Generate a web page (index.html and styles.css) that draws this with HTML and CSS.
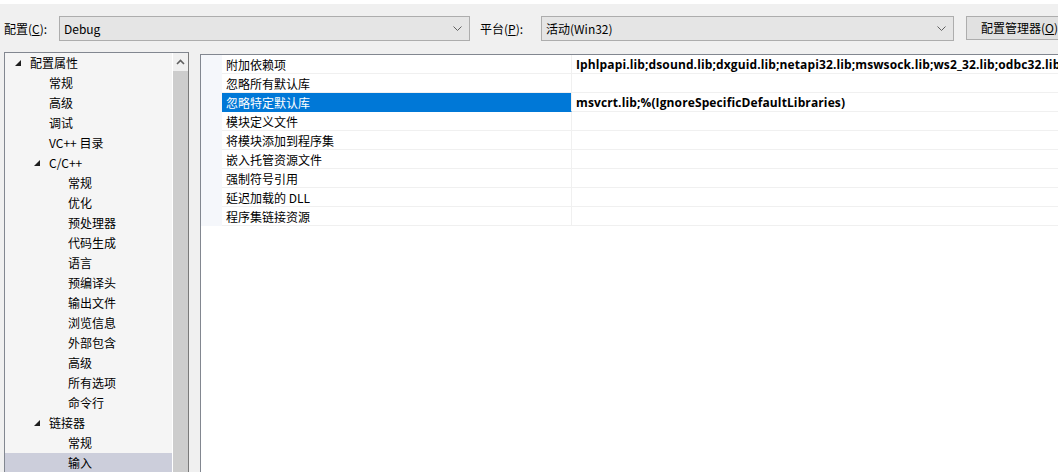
FILE: index.html
```html
<!DOCTYPE html>
<html lang="zh-CN">
<head>
    <meta charset="UTF-8" />
    <title>属性页</title>
    <link rel="stylesheet" href="styles.css">
</head>
<body>
    <div class="topstrip"></div>

    <div class="toolbar">
        <label class="tb-label cfg-label">配置(<u>C</u>):</label>
        <div class="combo cfg-combo">
            <span class="combo-text">Debug</span>
            <svg class="combo-arrow" width="9" height="6" viewBox="0 0 9 6"><path d="M0.5 0.5 L4.5 4.5 L8.5 0.5" fill="none" stroke="#606060" stroke-width="1"/></svg>
        </div>
        <label class="tb-label plat-label">平台(<u>P</u>):</label>
        <div class="combo plat-combo">
            <span class="combo-text">活动(Win32)</span>
            <svg class="combo-arrow" width="9" height="6" viewBox="0 0 9 6"><path d="M0.5 0.5 L4.5 4.5 L8.5 0.5" fill="none" stroke="#606060" stroke-width="1"/></svg>
        </div>
        <div class="button">配置管理器(<u>O</u>)</div>
    </div>

    <div class="main">
        <div class="tree-panel">
            <ul class="tree">
                <li class="node lvl0"><span class="twisty"></span>配置属性</li>
                <li class="node lvl1">常规</li>
                <li class="node lvl1">高级</li>
                <li class="node lvl1">调试</li>
                <li class="node lvl1">VC++ 目录</li>
                <li class="node lvl1"><span class="twisty"></span>C/C++</li>
                <li class="node lvl2">常规</li>
                <li class="node lvl2">优化</li>
                <li class="node lvl2">预处理器</li>
                <li class="node lvl2">代码生成</li>
                <li class="node lvl2">语言</li>
                <li class="node lvl2">预编译头</li>
                <li class="node lvl2">输出文件</li>
                <li class="node lvl2">浏览信息</li>
                <li class="node lvl2">外部包含</li>
                <li class="node lvl2">高级</li>
                <li class="node lvl2">所有选项</li>
                <li class="node lvl2">命令行</li>
                <li class="node lvl1"><span class="twisty"></span>链接器</li>
                <li class="node lvl2">常规</li>
                <li class="node lvl2 selected">输入</li>
            </ul>
            <div class="scrollbar">
                <div class="scroll-up">
                    <svg width="9" height="6" viewBox="0 0 9 6"><path d="M1 5 L4.5 1.5 L8 5" fill="none" stroke="#606060" stroke-width="1.6"/></svg>
                </div>
                <div class="scroll-thumb"></div>
            </div>
        </div>

        <div class="grid-panel">
            <div class="grid">
                <div class="row"><div class="gutter"></div><div class="name">附加依赖项</div><div class="value">Iphlpapi.lib;dsound.lib;dxguid.lib;netapi32.lib;mswsock.lib;ws2_32.lib;odbc32.lib</div></div>
                <div class="row"><div class="gutter"></div><div class="name">忽略所有默认库</div><div class="value"></div></div>
                <div class="row"><div class="gutter"></div><div class="name active">忽略特定默认库</div><div class="value">msvcrt.lib;%(IgnoreSpecificDefaultLibraries)</div></div>
                <div class="row"><div class="gutter"></div><div class="name">模块定义文件</div><div class="value"></div></div>
                <div class="row"><div class="gutter"></div><div class="name">将模块添加到程序集</div><div class="value"></div></div>
                <div class="row"><div class="gutter"></div><div class="name">嵌入托管资源文件</div><div class="value"></div></div>
                <div class="row"><div class="gutter"></div><div class="name">强制符号引用</div><div class="value"></div></div>
                <div class="row"><div class="gutter"></div><div class="name">延迟加载的 DLL</div><div class="value"></div></div>
                <div class="row"><div class="gutter"></div><div class="name">程序集链接资源</div><div class="value"></div></div>
            </div>
        </div>
    </div>
</body>
</html>
```

FILE: styles.css
```css
body {
    margin: 0;
    background-color: #f0f0f0;
    font-family: "Noto Sans CJK SC", "Noto Sans", sans-serif;
    font-size: 12px;
    color: #000;
    overflow: hidden;
    height: 472px;
}

u {
    text-decoration: underline;
    text-underline-offset: 1px;
}

.topstrip {
    height: 4px;
    background-color: #fff;
}

.toolbar {
    display: flex;
    align-items: flex-start;
    height: 25px;
    margin-top: 12px;
    white-space: nowrap;
}

.toolbar > * {
    flex-shrink: 0;
}

.tb-label {
    line-height: 25px;
}

.cfg-label {
    width: 55px;
    padding-left: 4px;
}

.plat-label {
    width: 61px;
    padding-left: 10px;
}

.combo {
    display: flex;
    align-items: center;
    justify-content: space-between;
    box-sizing: border-box;
    height: 25px;
    border: 1px solid #adadad;
    background-color: #e5e5e5;
    padding: 0 7px 0 4px;
}

.cfg-combo {
    width: 411px;
}

.plat-combo {
    width: 413px;
}

.combo-text {
    line-height: 23px;
}

.button {
    box-sizing: border-box;
    height: 24px;
    margin-left: 12px;
    border: 1px solid #adadad;
    background-color: #e1e1e1;
    padding: 0 14px;
    line-height: 22px;
}

.main {
    display: flex;
    align-items: flex-start;
    margin-top: 11px;
}

.tree-panel {
    display: flex;
    flex-shrink: 0;
    box-sizing: border-box;
    width: 185px;
    height: 440px;
    margin-left: 4px;
    border: 1px solid #828790;
    border-right-color: #7a7a7a;
    background-color: #f5f5f5;
}

.tree {
    list-style: none;
    margin: 0;
    padding: 0;
    width: 167px;
    border-right: 1px solid #fff;
}

.node {
    position: relative;
    height: 20px;
    line-height: 20px;
    white-space: nowrap;
}

.lvl0 { padding-left: 25px; }
.lvl1 { padding-left: 44px; }
.lvl2 { padding-left: 63px; }

.node.selected {
    background-color: #cccedb;
}

.twisty {
    position: absolute;
    top: 7px;
    width: 0;
    height: 0;
    border-left: 6px solid transparent;
    border-bottom: 6px solid #1e1e1e;
}

.lvl0 .twisty { left: 10px; }
.lvl1 .twisty { left: 29px; }

.scrollbar {
    display: flex;
    flex-direction: column;
    width: 15px;
    background-color: #f0f0f0;
}

.scroll-up {
    display: flex;
    justify-content: center;
    align-items: center;
    height: 18px;
}

.scroll-thumb {
    flex: 1;
    background-color: #cdcdcd;
}

.grid-panel {
    box-sizing: border-box;
    flex: 1;
    height: 440px;
    margin-top: 2px;
    margin-left: 11px;
    border-top: 1px solid #828790;
    border-left: 1px solid #828790;
    background-color: #fff;
    overflow: hidden;
}

.grid {
    display: flex;
    flex-direction: column;
    width: 900px;
}

.row {
    display: flex;
    height: 19px;
}

.gutter {
    width: 21px;
    background-color: #f5f7fb;
}

.name {
    box-sizing: border-box;
    width: 350px;
    padding: 1px 0 0 4px;
    line-height: 17px;
    border-bottom: 1px solid #f0f0f0;
    border-right: 1px solid #f0f0f0;
    white-space: nowrap;
}

.name.active {
    background-color: #0078d7;
    color: #fff;
    border-bottom-color: #0078d7;
}

.value {
    flex: 1;
    box-sizing: border-box;
    padding: 1px 0 0 4px;
    line-height: 17px;
    border-bottom: 1px solid #f0f0f0;
    font-family: "Open Sans", "Noto Sans", sans-serif;
    font-weight: bold;
    font-size: 12px;
    letter-spacing: 0.12px;
    white-space: nowrap;
    overflow: hidden;
}
```
